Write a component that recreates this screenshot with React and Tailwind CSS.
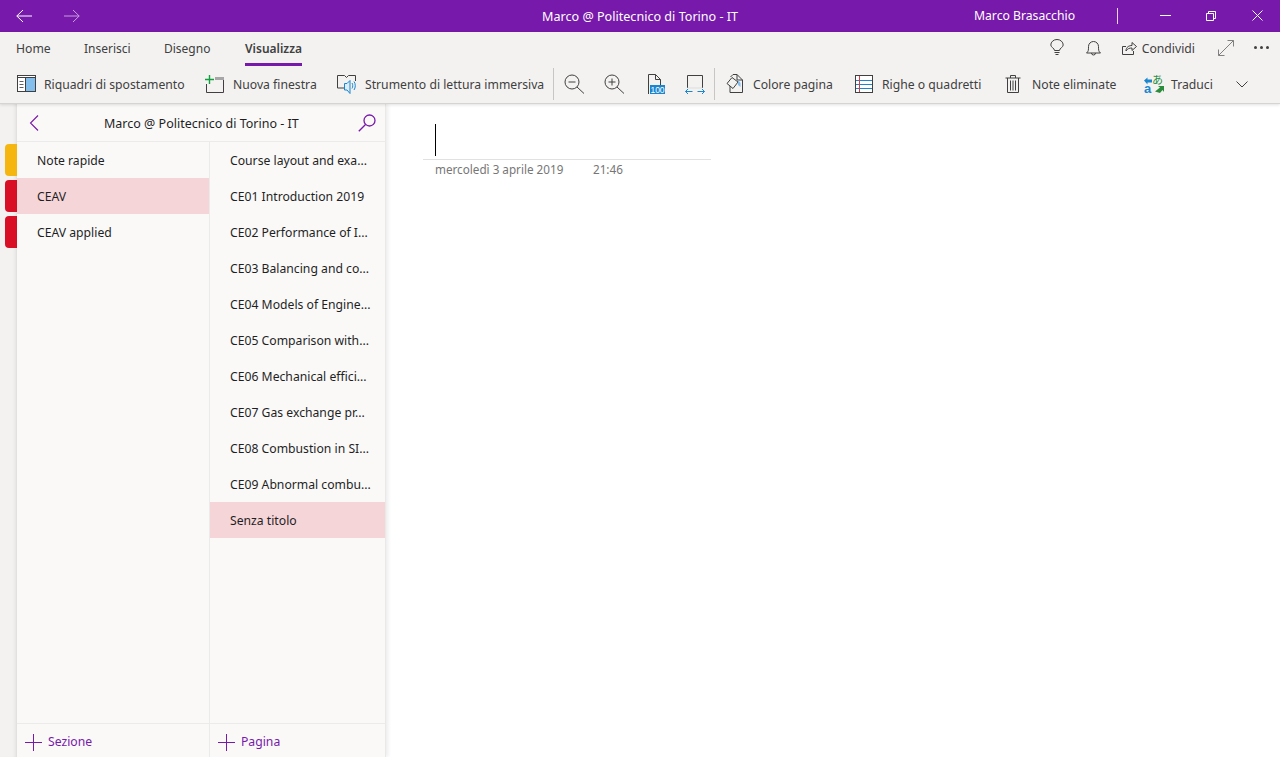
function BackArrow() {
  return (
    <svg width="16" height="14" viewBox="0 0 16 14" fill="none" stroke="currentColor" strokeWidth="1">
      <path d="M0.8 7H16M7 1 0.8 7 7 13" />
    </svg>
  );
}

function Paneli() {
  return (
    <svg width="20" height="18" viewBox="0 0 20 18" fill="none">
      <rect x="0.500" y="0.500" width="18" height="16" fill="#fff" stroke="#404040" />
      <rect x="9" y="3" width="9" height="13" fill="#83beec" />
      <path d="M1 2.500h17" stroke="#404040" />
      <path d="M2.500 6.500h4M2.500 9.500h4M2.500 12.500h4" stroke="#606060" />
      <path d="M8.500 3v13" stroke="#404040" />
    </svg>
  );
}

function NewWindow() {
  return (
    <svg width="20" height="18" viewBox="0 0 20 18" fill="none">
      <path d="M1.500 9v8.500h17V3" stroke="#404040" />
      <rect x="10" y="2" width="9" height="3" fill="#a6a6a6" />
      <path d="M0 4.500h9M4.500 0v9" stroke="#10a040" strokeWidth="1.400" />
    </svg>
  );
}

function Immersive() {
  return (
    <svg width="21" height="20" viewBox="0 0 21 20" fill="none">
      <path d="M7 14H0.500V1.500h7l2 2 2-2h7V7" stroke="#404040" />
      <path d="M7.500 9.500h2.500l3-3v13l-3-3.500H7.500z" fill="#dcecf9" stroke="#1a86d0" />
      <path d="M15 9c1 1.500 1 4 0 5.500M17 7.500c1.700 2.500 1.700 6 0 8.500" stroke="#1a86d0" />
    </svg>
  );
}

function Zoom({ plus }) {
  return (
    <svg width="21" height="20" viewBox="0 0 21 20" fill="none" stroke="#404040">
      <circle cx="8" cy="8" r="7" />
      <path d="M13 13l7 6.500M4.500 8h7" />
      {plus && <path d="M8 4.500v7" />}
    </svg>
  );
}

function Page100() {
  return (
    <svg width="18" height="20" viewBox="0 0 18 20" fill="none" className="overflow-visible">
      <path d="M1.500 20V0.500h7l5 5V11M8.500 0.500v5h5" stroke="#404040" />
      <rect x="3" y="11" width="15" height="9" fill="#1a86d0" />
      <text x="10.500" y="18.700" textAnchor="middle" fontSize="8.500" fontFamily="Liberation Sans, sans-serif" fill="#fff">100</text>
    </svg>
  );
}

function FitWidth() {
  return (
    <svg width="20" height="19" viewBox="0 0 20 19" fill="none">
      <path d="M2.500 13V0.500h15V13" stroke="#404040" />
      <path d="M2.500 13h15" stroke="#dddddd" />
      <path d="M0.500 16.500h7M3 14l-2.500 2.500L3 19M12.500 16.500h7M17 14l2.500 2.500L17 19" stroke="#1a86d0" />
    </svg>
  );
}

function PageColor() {
  return (
    <svg width="18" height="19" viewBox="0 0 18 19" fill="none">
      <path d="M4 12v6.500h12.500V6L11 0.500H7L4.500 3" stroke="#404040" />
      <path d="M11 0.500V6h5.500" stroke="#404040" />
      <path d="M6 3.500l6 4.500-5 6.500-6-5z" fill="#f3f2f1" stroke="#404040" />
      <path d="M12 6l2.500 3v4l-2.500-2z" fill="#83beec" />
    </svg>
  );
}

function Lines() {
  return (
    <svg width="18" height="18" viewBox="0 0 18 18" fill="none">
      <rect x="0.500" y="0.500" width="17" height="17" fill="#fff" stroke="#404040" />
      <path d="M1 5.500h16M1 9.500h16M1 13.500h16" stroke="#1a86d0" />
      <path d="M4.500 1v16" stroke="#e0383e" />
    </svg>
  );
}

function Trash() {
  return (
    <svg width="16" height="18" viewBox="0 0 16 18" fill="none" stroke="#404040">
      <path d="M0.500 3h15M5.500 3V0.500h5V3M2.500 3v14.500h11V3M5.500 5.500v10M8 5.500v10M10.500 5.500v10" />
    </svg>
  );
}

function Translate() {
  return (
    <svg width="20" height="20" viewBox="0 0 20 20" fill="none" className="overflow-visible">
      <path d="M0 6.500l3.500-3v2H8v3H3.500v2z" fill="#1a86d0" />
      <text x="0" y="19" fontSize="13" fontWeight="700" fontFamily="Liberation Sans, sans-serif" fill="#1a86d0">a</text>
      <text x="8" y="10" fontSize="11" fontFamily="Noto Sans CJK JP, sans-serif" fill="#2a8c3c">あ</text>
      <path d="M11 17.500l5-4-2-1.500h6v6l-1.500-2-2.500 3z" fill="#2a8c3c" />
    </svg>
  );
}

function ToolButton({ icon, label, width, textWidth }) {
  return (
    <div className={`flex items-center shrink-0 ${width}`}>
      <span className={`flex items-center shrink-0 ${textWidth}`}>{icon}</span>
      <span className="whitespace-nowrap pt-[2px]">{label}</span>
    </div>
  );
}

const sections = [
  { name: 'Note rapide' },
  { name: 'CEAV', active: true },
  { name: 'CEAV applied' },
];

const pages = [
  'Course layout and exa...',
  'CE01 Introduction 2019',
  'CE02 Performance of I...',
  'CE03 Balancing and co...',
  'CE04 Models of Engine...',
  'CE05 Comparison with...',
  'CE06 Mechanical effici...',
  'CE07 Gas exchange pr...',
  'CE08 Combustion in SI...',
  'CE09 Abnormal combu...',
  'Senza titolo',
];

export default function App() {
  return (
    <div className="h-[757px] w-[1280px] overflow-hidden flex flex-col bg-white text-[12.200px] text-[#1f1f1f] font-['Noto_Sans','Open_Sans',sans-serif]">
      {/* Title bar */}
      <div className="h-8 shrink-0 bg-[#7719aa] text-white flex items-center relative">
        <div className="flex items-center pl-4 gap-8">
          <BackArrow />
          <svg width="16" height="14" viewBox="0 0 16 14" fill="none" stroke="#c99fdc" strokeWidth="1">
            <path d="M0 7H15.200M9 1l6.200 6L9 13" />
          </svg>
        </div>
        <div className="absolute left-[542px] top-[8px] leading-[17px] whitespace-nowrap text-[12.600px]">Marco @ Politecnico di Torino - IT</div>
        <div className="ml-auto flex items-center">
          <span className="whitespace-nowrap">Marco Brasacchio</span>
          <span className="w-px h-4 bg-[#e6d3ef] ml-[42px] mr-[42px]"></span>
          <svg width="11" height="11" viewBox="0 0 11 11" stroke="#fff" fill="none"><path d="M0 5.500h11" /></svg>
          <svg width="10" height="10" viewBox="0 0 10 10" stroke="#fff" fill="none" className="ml-[35px]">
            <path d="M.5 2.500h7v7h-7zM2.500 2.500v-2h7v7h-2" />
          </svg>
          <svg width="11" height="11" viewBox="0 0 11 11" stroke="#fff" fill="none" className="ml-[36px] mr-[17px]">
            <path d="M.5.5l10 10M10.500.5l-10 10" />
          </svg>
        </div>
      </div>

      {/* Ribbon */}
      <div className="h-[72px] shrink-0 bg-[#f3f2f1] border-b border-[#d6d4d2] text-[#404040] relative z-10 shadow-[0_1px_3px_rgba(0,0,0,0.12)]">
        <div className="h-8 flex items-center pl-4 relative">
          <span className="w-[68px] pt-[2px]">Home</span>
          <span className="w-[80px] pt-[2px] text-[12px]">Inserisci</span>
          <span className="w-[81px] pt-[2px] text-[12px]">Disegno</span>
          <span className="font-semibold relative pt-[2px] text-[12px]">
            Visualizza
            <span className="absolute left-0 right-0 top-[25px] h-[3px] bg-[#7719aa]"></span>
          </span>
          <div className="ml-auto flex items-center pr-[8px]">
            <svg width="14" height="17" viewBox="0 0 14 17" fill="none" stroke="#404040">
              <path d="M4.500 11.500C4.500 9 .8 8.500.8 6a6.200 5.500 0 0 1 12.400 0c0 2.500-3.700 3-3.700 5.500zM4.500 13.500h5M5.500 15.500h3" />
            </svg>
            <svg width="15" height="16" viewBox="0 0 15 16" fill="none" stroke="#404040" className="ml-[22px]">
              <path d="M.5 13c2-1.500 2-3 2-6.500a5 5 0 0 1 10 0c0 3.500 0 5 2 6.500zM5.500 13a2 2 0 0 0 4 0" />
            </svg>
            <svg width="15" height="15" viewBox="0 0 15 15" fill="none" stroke="#404040" className="ml-[21px] mr-[5px]">
              <path d="M4 6.500H.5v8h11V11M4 11c0-4 3-5.500 6-5.500V2.500L14.500 6.500 10 10.500V8C7.500 8 5.500 8.500 4 11z" />
            </svg>
            <span className="pt-[2px]">Condividi</span>
            <svg width="16" height="16" viewBox="0 0 16 16" fill="none" stroke="#808080" className="ml-[23px]">
              <path d="M.5 15.500l15-15M9.500.5h6v6M.5 9.500v6h6" />
            </svg>
            <span className="flex gap-[3px] ml-[20px] mr-[3px]">
              <span className="w-[3px] h-[3px] rounded-full bg-[#404040]"></span>
              <span className="w-[3px] h-[3px] rounded-full bg-[#404040]"></span>
              <span className="w-[3px] h-[3px] rounded-full bg-[#404040]"></span>
            </span>
          </div>
        </div>
        <div className="h-10 flex items-center pl-[17px]">
          <ToolButton icon={<Paneli />} label="Riquadri di spostamento" width="w-[188px]" textWidth="w-[27px]" />
          <ToolButton icon={<NewWindow />} label="Nuova finestra" width="w-[132px]" textWidth="w-[28px]" />
          <ToolButton icon={<Immersive />} label="Strumento di lettura immersiva" width="w-[216px]" textWidth="w-[28px]" />
          <span className="w-px h-8 bg-[#c8c6c4] shrink-0"></span>
          <span className="ml-[10px] w-[40px] shrink-0"><Zoom /></span>
          <span className="w-[43px] shrink-0"><Zoom plus /></span>
          <span className="w-[38px] shrink-0"><Page100 /></span>
          <span className="w-[29px] shrink-0"><FitWidth /></span>
          <span className="w-px h-8 bg-[#c8c6c4] shrink-0"></span>
          <span className="ml-[11px]"></span>
          <ToolButton icon={<PageColor />} label="Colore pagina" width="w-[129px]" textWidth="w-[27px]" />
          <ToolButton icon={<Lines />} label="Righe o quadretti" width="w-[150px]" textWidth="w-[27px]" />
          <ToolButton icon={<Trash />} label="Note eliminate" width="w-[139px]" textWidth="w-[27px]" />
          <ToolButton icon={<Translate />} label="Traduci" width="w-[92px]" textWidth="w-[27px]" />
          <svg width="12" height="7" viewBox="0 0 12 7" fill="none" stroke="#404040" className="shrink-0">
            <path d="M.5.5L6 6 11.500.5" />
          </svg>
        </div>
      </div>

      {/* Body */}
      <div className="flex-1 flex min-h-0">
        {/* Section tabs rail */}
        <div className="w-[17px] shrink-0 bg-[#f3f2f1] flex flex-col pt-[40px] gap-[4px] shadow-[inset_-4px_0_4px_-3px_rgba(0,0,0,0.10)]">
          <div className="ml-[5px] h-[32px] rounded-l-[4px] bg-[#f5b70f]"></div>
          <div className="ml-[5px] h-[32px] rounded-l-[4px] bg-[#d80f25]"></div>
          <div className="ml-[5px] h-[32px] rounded-l-[4px] bg-[#d80f25]"></div>
        </div>

        {/* Navigation panes */}
        <div className="w-[369px] shrink-0 flex flex-col bg-[#faf9f8] border-r border-[#ebe9e7] shadow-[2px_0_4px_rgba(0,0,0,0.08)] relative">
          <div className="h-[38px] shrink-0 flex items-center border-b border-[#ebebeb] relative">
            <svg width="10" height="16" viewBox="0 0 10 16" fill="none" stroke="#7719aa" strokeWidth="1.100" className="ml-[12px]">
              <path d="M9 .5L1.500 8 9 15.500" />
            </svg>
            <span className="ml-[65px] whitespace-nowrap pt-[4px] text-[12.500px]">Marco @ Politecnico di Torino - IT</span>
            <svg width="18" height="18" viewBox="0 0 18 18" fill="none" stroke="#7719aa" strokeWidth="1.300" className="ml-auto mr-[9px]">
              <circle cx="11.500" cy="6.500" r="5.500" />
              <path d="M7.500 10.500L.8 17.200" />
            </svg>
          </div>
          <div className="flex-1 flex min-h-0">
            <div className="w-[193px] shrink-0 border-r border-[#ebebeb]">
              {sections.map((s) => (
                <div key={s.name} className={`h-[36px] flex items-center pl-[20px] pt-[2px] ${s.active ? 'bg-[#f6d5d9]' : ''}`}>
                  {s.name}
                </div>
              ))}
            </div>
            <div className="flex-1">
              {pages.map((p) => (
                <div key={p} className={`h-[36px] flex items-center pl-[20px] pt-[2px] whitespace-nowrap ${p === 'Senza titolo' ? 'bg-[#f6d5d9]' : ''}`}>
                  {p}
                </div>
              ))}
            </div>
          </div>
          <div className="h-[34px] shrink-0 flex border-t border-[#ebebeb] text-[#7719aa]">
            <div className="w-[193px] shrink-0 border-r border-[#ebebeb] flex items-center pl-[8px] pt-[4px]">
              <svg width="17" height="17" viewBox="0 0 17 17" stroke="#7719aa" fill="none" className="mr-[6px]"><path d="M0 8.500h17M8.500 0v17" /></svg>
              Sezione
            </div>
            <div className="flex-1 flex items-center pl-[8px] pt-[4px]">
              <svg width="17" height="17" viewBox="0 0 17 17" stroke="#7719aa" fill="none" className="mr-[6px]"><path d="M0 8.500h17M8.500 0v17" /></svg>
              Pagina
            </div>
          </div>
        </div>

        {/* Page canvas */}
        <div className="flex-1 pl-[37px] pt-[20px]">
          <div className="w-[288px] h-[36px] border-b border-[#e1e1e1] pl-[12px]">
            <div className="w-px h-[32px] bg-black"></div>
          </div>
          <div className="pl-[12px] pt-[1px] text-[11.700px] text-[#767676] flex">
            <span className="w-[158px] whitespace-nowrap">mercoledì 3 aprile 2019</span>
            <span>21:46</span>
          </div>
        </div>
      </div>
    </div>
  );
}
